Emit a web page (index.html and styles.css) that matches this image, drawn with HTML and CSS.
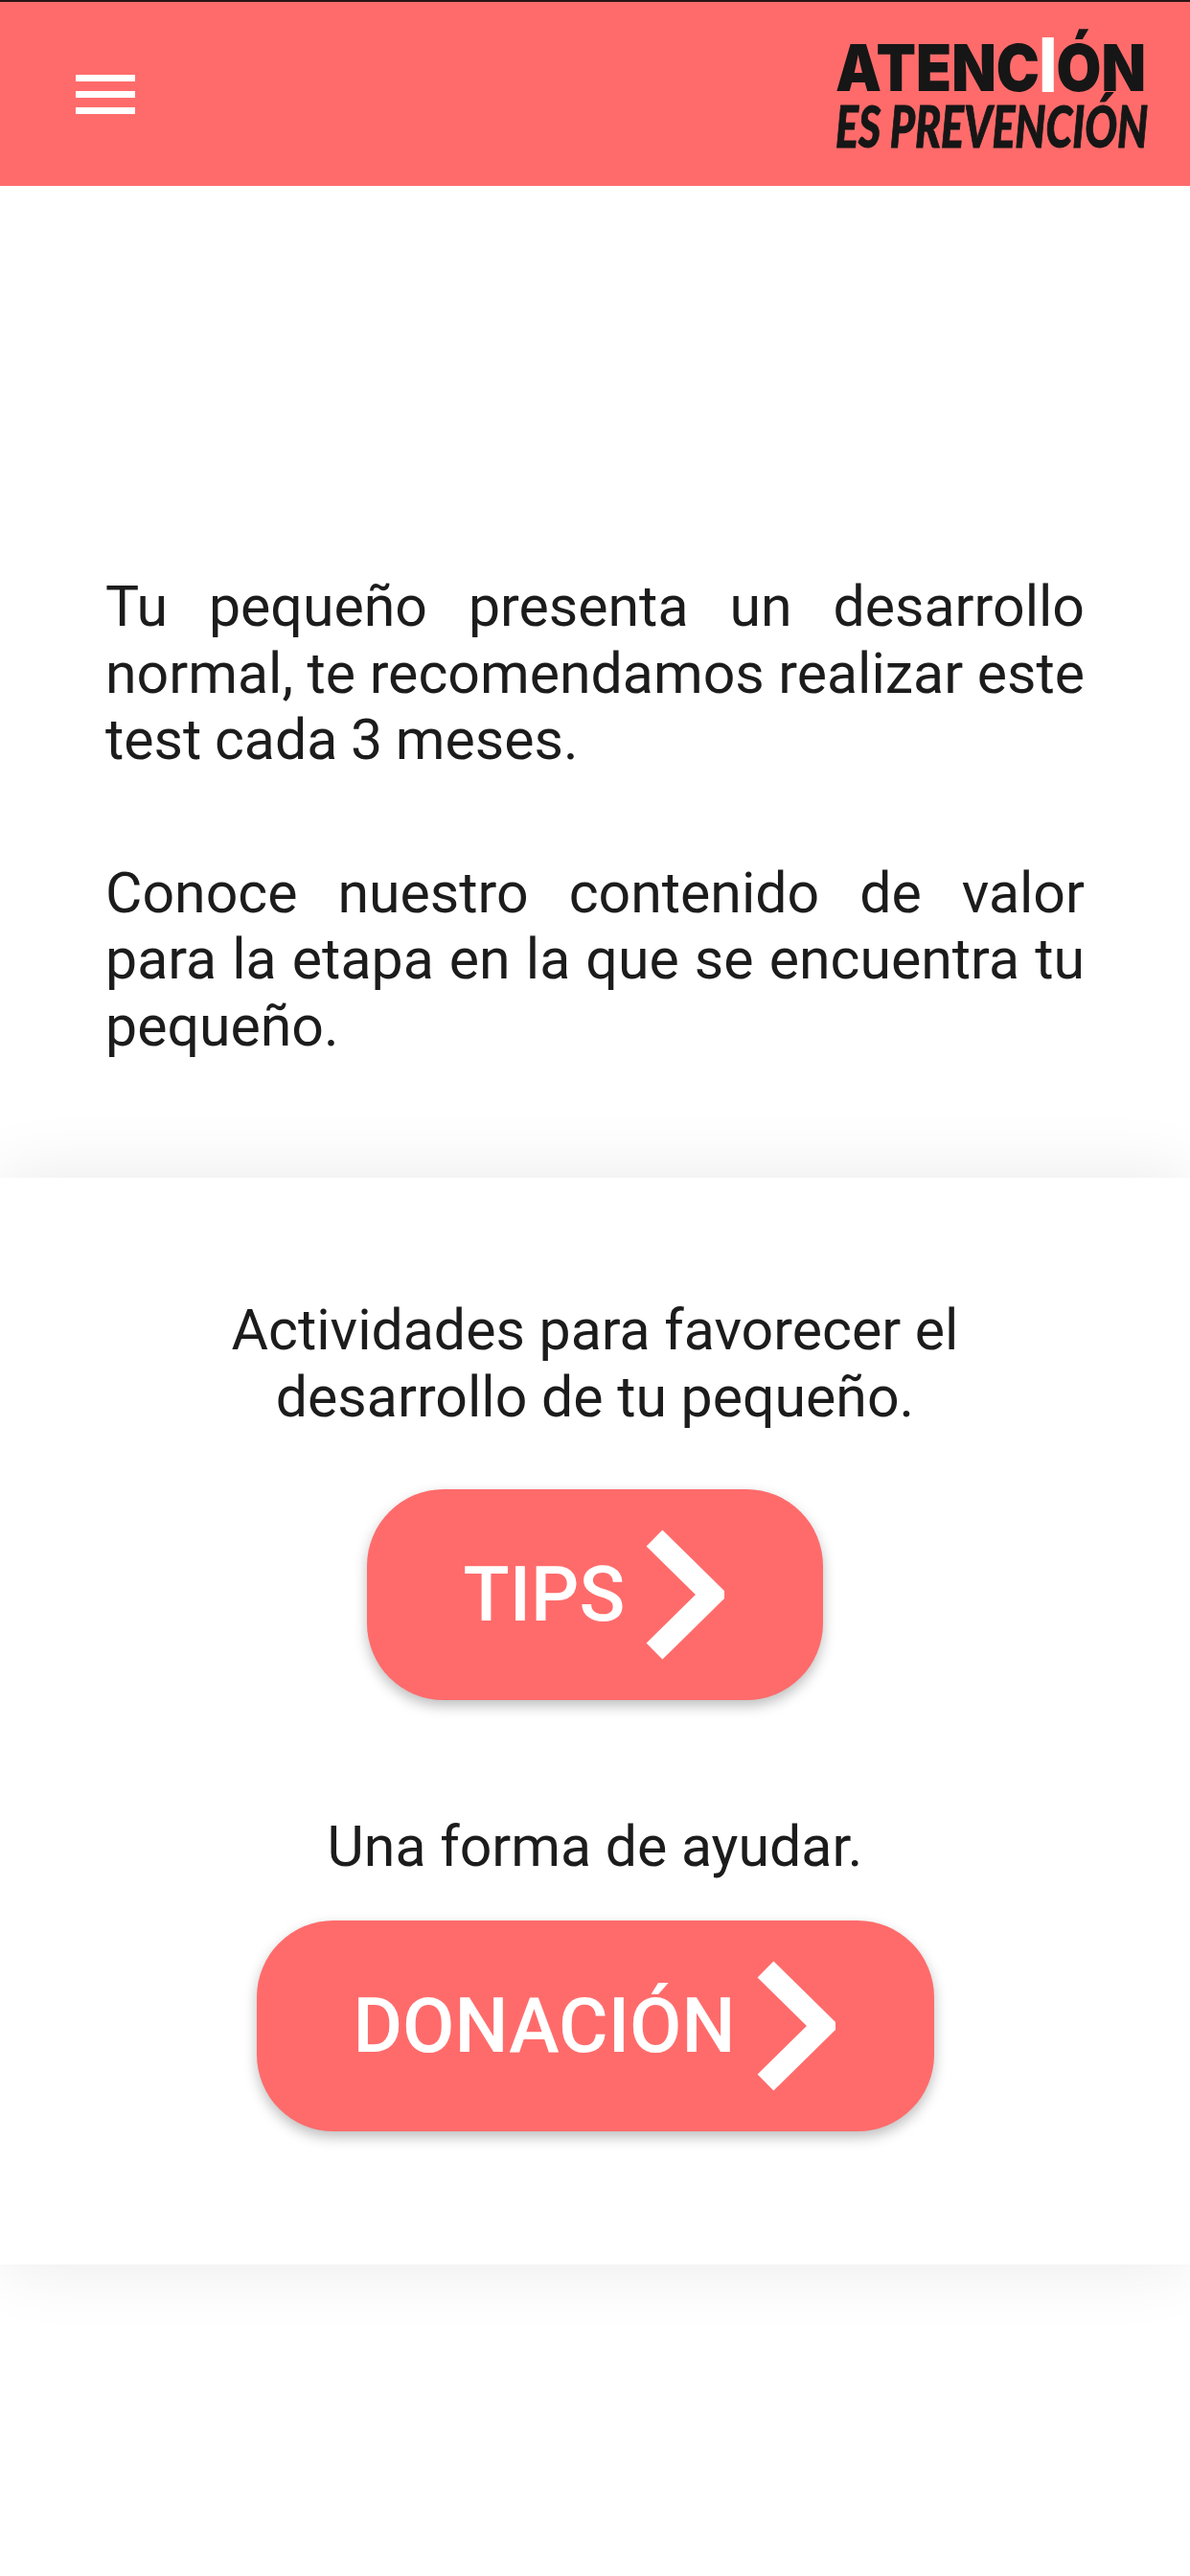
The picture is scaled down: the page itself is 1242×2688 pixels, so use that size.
FILE: index.html
```html
<!DOCTYPE html>
<html lang="en">
<head>
    <meta charset="UTF-8">
    <meta name="viewport" content="width=device-width, initial-scale=1.0">
    <title>Atención es prevención</title>
    <link rel="stylesheet" href="styles.css">
</head>
<body>
    <!-- Header -->
    <header class="topbar">
        <div class="menu-icon">
            <span></span>
            <span></span>
            <span></span>
        </div>
        <div class="logo">
            <div class="logo-top">ATENC<span class="logo-i">I</span>ÓN</div>
            <div class="logo-bottom">ES PREVENCIÓN</div>
        </div>
    </header>

    <!-- Result text -->
    <section class="intro">
        <p>Tu pequeño presenta un desarrollo normal, te recomendamos realizar este test cada 3 meses.</p>
        <p>Conoce nuestro contenido de valor para la etapa en la que se encuentra tu pequeño.</p>
    </section>

    <!-- Links -->
    <section class="card">
        <p class="card-text">Actividades para favorecer el<br>desarrollo de tu pequeño.</p>
        <a href="#" class="btn btn-tips">
            TIPS
            <svg class="chevron" viewBox="0 0 82 136"><polyline points="9,9 69,68 9,127"/></svg>
        </a>
        <p class="card-text card-text-help">Una forma de ayudar.</p>
        <a href="#" class="btn btn-donate">
            DONACIÓN
            <svg class="chevron" viewBox="0 0 82 136"><polyline points="9,9 69,68 9,127"/></svg>
        </a>
    </section>
</body>
</html>
```

FILE: styles.css
```css
body {
    font-family: Roboto, Arial, sans-serif;
    background-color: #fff;
    color: #1c1c1c;
    margin: 0;
    padding: 0;
    min-height: 2688px;
}

/* Header */
.topbar {
    box-sizing: border-box;
    height: 194px;
    border-top: 2px solid #2a1516;
    background-color: #ff6b6b;
    padding: 0 49px 0 79px;
    display: flex;
    align-items: center;
    justify-content: space-between;
}
.menu-icon {
    width: 62px;
    display: flex;
    flex-direction: column;
    gap: 10px;
}
.menu-icon span {
    display: block;
    height: 7px;
    background-color: #fff;
}
.logo {
    width: 321px;
    color: #161616;
    white-space: nowrap;
}
.logo-top {
    font-family: Inter, Arial, sans-serif;
    font-weight: 900;
    font-size: 68px;
    line-height: 66px;
    transform: scaleX(0.89);
    transform-origin: left center;
}
.logo-i {
    display: inline-block;
    color: #fff;
    transform: scaleY(1.16);
    transform-origin: 50% 78%;
}
.logo-bottom {
    font-family: Lato, Arial, sans-serif;
    font-weight: 900;
    font-style: italic;
    font-size: 60px;
    line-height: 56px;
    -webkit-text-stroke: 1px #161616;
    transform: scaleX(0.745);
    transform-origin: left center;
}

/* Result text */
.intro {
    padding: 404px 110px 0;
    height: 1035px;
    box-sizing: border-box;
    font-size: 59px;
    line-height: 69.5px;
    word-spacing: -1px;
    text-align: justify;
}
.intro p {
    margin: 0 0 90px;
}

/* Links */
.card {
    position: relative;
    height: 1134px;
    box-sizing: border-box;
    padding-top: 124px;
    background-color: #fff;
    box-shadow: 0 0 70px rgba(0, 0, 0, 0.09);
    display: flex;
    flex-direction: column;
    align-items: center;
}
.card-text {
    margin: 0;
    font-size: 59px;
    line-height: 70px;
    text-align: center;
}
.card-text-help {
    margin-top: 118px;
}
.btn {
    box-sizing: border-box;
    height: 220px;
    border-radius: 80px;
    background-color: #ff6b6b;
    color: #fff;
    font-size: 79px;
    font-weight: 500;
    text-decoration: none;
    display: flex;
    align-items: center;
    justify-content: center;
    gap: 22px;
    box-shadow: 0 6px 14px rgba(0, 0, 0, 0.26);
}
.btn-tips {
    width: 476px;
    margin-top: 61px;
}
.btn-donate {
    width: 707px;
    margin-top: 42px;
}
.chevron {
    width: 82px;
    height: 136px;
    margin-right: 2px;
    fill: none;
    stroke: #fff;
    stroke-width: 24px;
}
```
